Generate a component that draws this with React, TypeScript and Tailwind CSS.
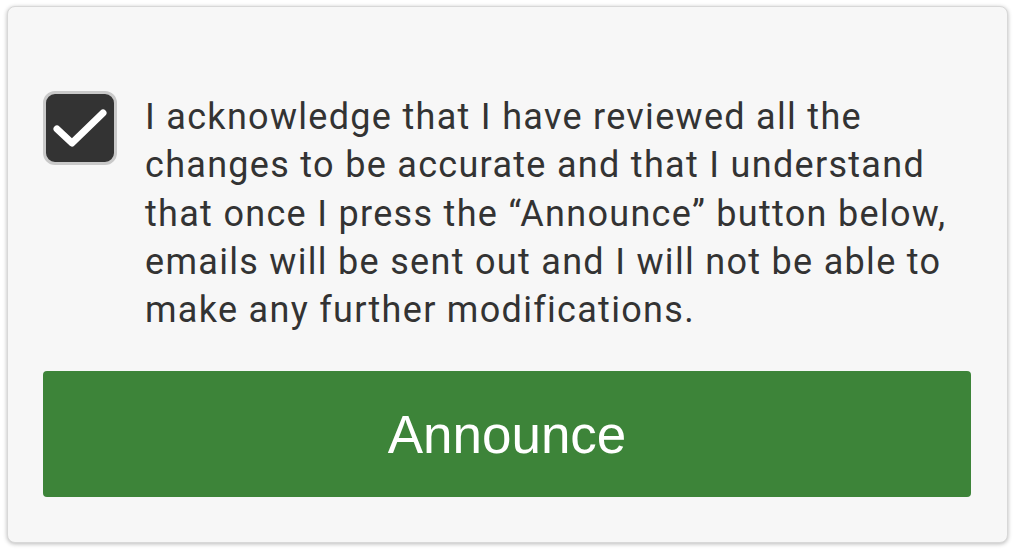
export default function App() {
  return (
    <div className="min-h-screen bg-white pl-[7px] pt-[6px]">
      <div className="flex h-[537px] w-[1001px] flex-col rounded-[8px] border border-[#d8d8d8] bg-[#f7f7f7] px-[35px] pt-[86px] shadow-[0_1px_4px_rgba(0,0,0,0.28)]">
        <label className="flex items-start gap-[28px]">
          <span className="mt-[-2px] flex h-[74px] w-[74px] shrink-0 items-center justify-center rounded-[12px] border-[3px] border-[#c9c9c9] bg-[#333333]">
            <svg width="68" height="68" viewBox="0 0 68 68" fill="none">
              <path
                d="M11 35 L26 49 L57 19"
                stroke="white"
                strokeWidth="7"
                strokeLinecap="round"
                strokeLinejoin="round"
              />
            </svg>
          </span>
          <p className="font-['Roboto',sans-serif] text-[36px] leading-[48.25px] tracking-[1.3px] text-[#333333]">
            I acknowledge that I have reviewed all the
            <br />
            changes to be accurate and that I understand
            <br />
            that once I press the “Announce” button below,
            <br />
            emails will be sent out and I will not be able to
            <br />
            make any further modifications.
          </p>
        </label>
        <button className="mt-[37px] flex h-[126px] w-[928px] items-center justify-center rounded-[4px] bg-[#3d8439] font-['Liberation_Sans',sans-serif] text-[53px] text-white">
          Announce
        </button>
      </div>
    </div>
  );
}
